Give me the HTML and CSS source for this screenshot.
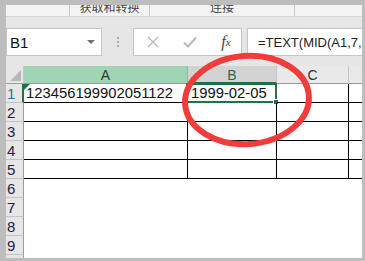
FILE: index.html
```html
<!DOCTYPE html>
<html lang="zh">
<head>
  <meta charset="UTF-8" />
  <title>Excel - TEXT MID</title>
  <link rel="stylesheet" href="styles.css">
</head>
<body>

<div class="frame">
  <div class="window">

    <!-- ribbon group labels, cut off at the top -->
    <div class="ribbon">
      <div class="group g-first"></div>
      <div class="group g-get">获取和转换</div>
      <div class="group g-link">连接</div>
      <div class="group g-last"></div>
    </div>

    <!-- name box + formula bar -->
    <div class="formula-area">
      <div class="namebox">
        <span>B1</span>
        <span class="caret"></span>
      </div>
      <div class="grip"><i></i><i></i><i></i></div>
      <div class="fx-buttons">
        <span class="fx-btn">
          <svg width="12" height="12" viewBox="0 0 12 12"><path d="M1 1 L11 11 M11 1 L1 11" stroke="#b9b9b9" stroke-width="1.4" fill="none"/></svg>
        </span>
        <span class="fx-btn">
          <svg width="14" height="12" viewBox="0 0 14 12"><path d="M1 6.5 L5 10.5 L13 1.5" stroke="#b9b9b9" stroke-width="2" fill="none"/></svg>
        </span>
        <span class="fx-btn fx">f<sub>x</sub></span>
      </div>
      <div class="formula">=TEXT(MID(A1,7,8),"0000-00-00")</div>
    </div>

    <!-- sheet -->
    <div class="sheet">
      <div class="corner"><span class="corner-tri"></span></div>
      <div class="colhead col-a">A</div>
      <div class="colhead col-b">B</div>
      <div class="colhead">C</div>
      <div class="colhead last"></div>

      <div class="rowhead row-sel">1</div>
      <div class="cell a1"><span class="err-tri"></span>123456199902051122</div>
      <div class="cell b1">1999-02-05<span class="sel-box"><span class="handle"></span></span></div>
      <div class="cell"></div>
      <div class="cell last"></div>

      <div class="rowhead">2</div>
      <div class="cell"></div><div class="cell"></div><div class="cell"></div><div class="cell last"></div>
      <div class="rowhead">3</div>
      <div class="cell"></div><div class="cell"></div><div class="cell"></div><div class="cell last"></div>
      <div class="rowhead">4</div>
      <div class="cell"></div><div class="cell"></div><div class="cell"></div><div class="cell last"></div>
      <div class="rowhead">5</div>
      <div class="cell"></div><div class="cell"></div><div class="cell"></div><div class="cell last"></div>

      <div class="rowhead">6</div>
      <div class="blank"></div><div class="blank"></div><div class="blank"></div><div class="blank"></div>
      <div class="rowhead">7</div>
      <div class="blank"></div><div class="blank"></div><div class="blank"></div><div class="blank"></div>
      <div class="rowhead">8</div>
      <div class="blank"></div><div class="blank"></div><div class="blank"></div><div class="blank"></div>
      <div class="rowhead">9</div>
      <div class="blank"></div><div class="blank"></div><div class="blank"></div><div class="blank"></div>
      <div class="rowhead">10</div>
      <div class="blank"></div><div class="blank"></div><div class="blank"></div><div class="blank"></div>
    </div>

    <!-- red hand-drawn circle over B1 -->
    <svg class="mark" width="150" height="110" viewBox="0 0 150 110">
      <ellipse cx="73" cy="53" rx="62" ry="44" transform="rotate(-4 73 53)" fill="none" stroke="#f23b3b" stroke-width="6"/>
    </svg>

  </div>
</div>

</body>
</html>
```

FILE: styles.css
```css
* { box-sizing: border-box; }
body { margin: 0; background: #bdbdbd; font-family: "Liberation Sans", Arial, sans-serif; color: #222; }

.frame {
  width: 365px;
  height: 261px;
  padding: 5px 3px 3px 6px;
  background: #bdbdbd;
}

.window {
  position: relative;
  width: 356px;
  height: 253px;
  overflow: hidden;
  background: #e6e6e6;
}

/* ribbon */
.ribbon {
  display: flex;
  height: 12px;
  background: #f3f3f3;
  border-bottom: 1px solid #d4d4d4;
  overflow: hidden;
}

.group {
  height: 12px;
  line-height: 4px;
  font-size: 12px;
  color: #444;
  text-align: center;
  font-family: "Noto Sans CJK SC", sans-serif;
  border-right: 1px solid #c8c8c8;
}

.g-first { width: 64px; }
.g-get { width: 80px; }
.g-link { width: 145px; }
.g-last { flex: 1; border-right: none; }

/* formula bar */
.formula-area {
  display: flex;
  align-items: stretch;
  height: 49px;
  padding: 11px 0 10px 0;
}

.namebox {
  display: flex;
  align-items: center;
  justify-content: space-between;
  width: 96px;
  background: #fff;
  border: 1px solid #c6c6c6;
  padding: 0 6px 0 3px;
  font-size: 15px;
  color: #111;
}

.caret {
  width: 0;
  height: 0;
  border-left: 4px solid transparent;
  border-right: 4px solid transparent;
  border-top: 4px solid #6e6e6e;
}

.grip {
  width: 31px;
  display: flex;
  flex-direction: column;
  align-items: center;
  justify-content: center;
  gap: 2px;
}

.grip i {
  width: 2px;
  height: 2px;
  background: #a8a8a8;
}

.fx-buttons {
  display: flex;
  align-items: center;
  width: 109px;
  background: #fff;
  border: 1px solid #c6c6c6;
  padding-left: 12px;
}

.fx-btn {
  display: flex;
  align-items: center;
  justify-content: center;
}

.fx-btn:first-child { width: 14px; margin-right: 22px; }
.fx-btn:nth-child(2) { width: 16px; margin-right: 20px; }

.fx {
  font-family: "Liberation Serif", serif;
  font-style: italic;
  font-size: 16px;
  color: #444;
  width: 16px;
}

.fx sub { font-size: 11px; vertical-align: -1px; }

.formula {
  flex: 1;
  margin-left: 5px;
  background: #fff;
  border: 1px solid #c6c6c6;
  border-right: none;
  padding: 0 0 0 10px;
  display: flex;
  align-items: center;
  font-size: 13px;
  color: #222;
  white-space: nowrap;
  overflow: hidden;
}

/* sheet grid */
.sheet {
  display: grid;
  grid-template-columns: 18px 164px 89px 72px 13px;
  grid-template-rows: 18px repeat(10, 19px);
  background: #fff;
}

.corner {
  position: relative;
  background: #e6e6e6;
  border-right: 1px solid #c6c6c6;
  border-bottom: 1px solid #9b9b9b;
}

.corner-tri {
  position: absolute;
  right: 2px;
  bottom: 2px;
  width: 0;
  height: 0;
  border-left: 11px solid transparent;
  border-bottom: 11px solid #b7b7b7;
}

.colhead {
  background: #e9e9e9;
  border-right: 1px solid #c6c6c6;
  border-bottom: 1px solid #9b9b9b;
  font-size: 14px;
  color: #333;
  text-align: center;
  line-height: 18px;
}

.col-a { background: #9fd5b5; border-right-color: #8abf9f; }
.col-b { background: #d3d3d3; color: #1e6e3f; border-bottom: 2px solid #217346; line-height: 19px; }
.colhead.last { border-right: none; }

.rowhead {
  background: #e6e6e6;
  border-right: 1px solid #9b9b9b;
  border-bottom: 1px solid #c3c3c3;
  font-size: 15px;
  line-height: 19px;
  padding-left: 1px;
  color: #1c2440;
  overflow: hidden;
}

.row-sel { color: #1f74a8; border-right: 2px solid #217346; }

.cell {
  position: relative;
  border-right: 1px solid #000;
  border-bottom: 1px solid #000;
  font-size: 14.8px;
  line-height: 18px;
  padding-left: 2px;
  color: #111;
  white-space: nowrap;
}

.cell.last { border-right: none; }

.b1 { padding-left: 3px; }

.err-tri {
  position: absolute;
  left: 0;
  top: 0;
  width: 0;
  height: 0;
  border-top: 6px solid #217346;
  border-right: 6px solid transparent;
}

.sel-box {
  position: absolute;
  left: -2px;
  top: -1px;
  right: -1px;
  bottom: -1px;
  border: 2px solid #217346;
}

.handle {
  position: absolute;
  right: -4px;
  bottom: -4px;
  width: 6px;
  height: 6px;
  background: #217346;
  border: 1px solid #fff;
}

.blank { background: #fff; }

.mark {
  position: absolute;
  left: 168px;
  top: 42px;
}
```
